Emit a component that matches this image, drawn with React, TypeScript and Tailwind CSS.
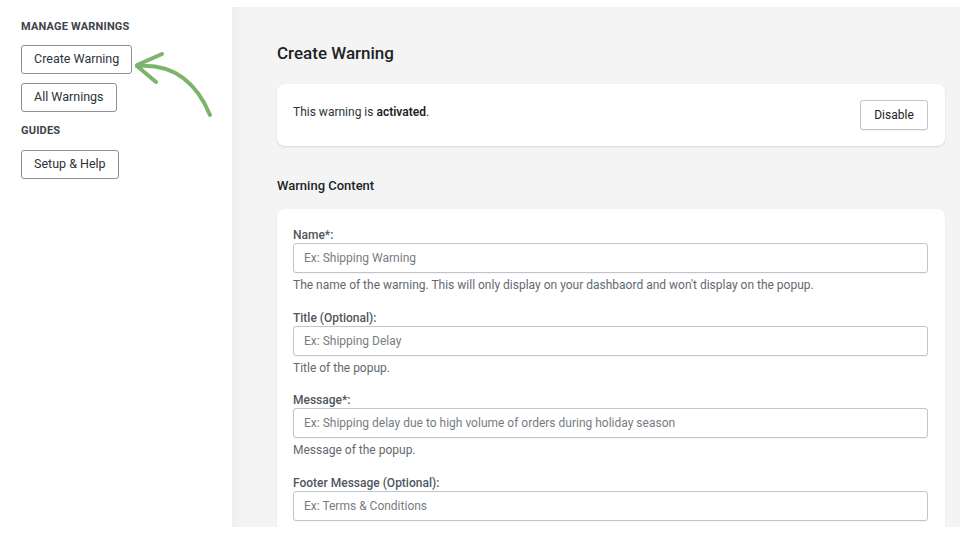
import React from "react";

const fields = [
  {
    label: "Name*:",
    placeholder: "Ex: Shipping Warning",
    help: "The name of the warning. This will only display on your dashbaord and won't display on the popup.",
  },
  { label: "Title (Optional):", placeholder: "Ex: Shipping Delay", help: "Title of the popup." },
  {
    label: "Message*:",
    placeholder: "Ex: Shipping delay due to high volume of orders during holiday season",
    help: "Message of the popup.",
  },
  { label: "Footer Message (Optional):", placeholder: "Ex: Terms & Conditions", help: "Footer of the popup." },
];

function SideButton({ children }: { children: React.ReactNode }) {
  return (
    <button className="h-[29px] px-[12px] rounded-[3px] border border-[#8c8f94] bg-white text-[12.5px] text-[#2c3338] leading-none">
      {children}
    </button>
  );
}

function Arrow() {
  return (
    <svg className="absolute left-0 top-0 pointer-events-none" width="240" height="140" viewBox="0 0 240 140">
      <path d="M210 115 Q188 62 137 66" fill="none" stroke="#7db46c" strokeWidth="4" strokeLinecap="round" />
      <path d="M137 65 L162 54" fill="none" stroke="#7db46c" strokeWidth="4" strokeLinecap="round" />
      <path d="M137 66 L156 82" fill="none" stroke="#7db46c" strokeWidth="4" strokeLinecap="round" />
    </svg>
  );
}

export default function App() {
  return (
    <div className="relative w-[960px] h-[540px] bg-white flex overflow-hidden" style={{ fontFamily: "Roboto, 'Liberation Sans', sans-serif" }}>
      <aside className="w-[232px] shrink-0 pl-[21px] pt-[19px] flex flex-col items-start">
        <h3 className="text-[11px] leading-[16px] font-bold tracking-[0.2px] text-[#3c434a] uppercase mb-[10px]">Manage Warnings</h3>
        <SideButton>Create Warning</SideButton>
        <div className="h-[9px]" />
        <SideButton>All Warnings</SideButton>
        <h3 className="text-[11px] leading-[16px] font-bold tracking-[0.2px] text-[#3c434a] uppercase mt-[11px] mb-[11px]">Guides</h3>
        <SideButton>Setup &amp; Help</SideButton>
      </aside>
      <Arrow />
      <main className="flex-1 mt-[7px] h-[520px] bg-[#f4f4f4] overflow-hidden pl-[45px] pr-[15px] pt-[34px] shadow-[inset_12px_0_10px_-10px_rgba(0,0,0,0.04)]">
        <h1 className="text-[17px] leading-[24px] font-medium text-[#1d2327] mb-[19px]">Create Warning</h1>
        <div className="h-[62px] bg-white rounded-lg shadow-[0_1px_2px_rgba(0,0,0,0.12)] flex items-center justify-between pl-[16px] pr-[17px]">
          <p className="-mt-[6px] text-[12px] text-[#2c3338]">
            This warning is <span className="font-semibold text-[#1d2327]">activated</span>.
          </p>
          <button className="h-[30px] w-[68px] rounded-[3px] border border-[#c3c4c7] bg-white text-[12px] text-[#1d2327] shadow-[0_1px_1px_rgba(0,0,0,0.06)]">
            Disable
          </button>
        </div>
        <h2 className="mt-[30px] mb-[13px] text-[13px] leading-[20px] font-medium text-[#1d2327]">Warning Content</h2>
        <div className="bg-white rounded-lg shadow-[0_1px_2px_rgba(0,0,0,0.08)] pl-[16px] pr-[17px] pt-[18px] pb-[20px] flex flex-col gap-[16.5px]">
          {fields.map((f) => (
            <div key={f.label} className="flex flex-col">
              <label className="text-[12px] leading-[16px] font-medium text-[#50575e]">{f.label}</label>
              <input
                readOnly
                placeholder={f.placeholder}
                className="h-[30px] rounded-[3px] border border-[#c3c4c7] bg-white px-[10px] text-[12px] placeholder:text-[#787c82] shadow-[0_1px_1px_rgba(0,0,0,0.04)] outline-none"
              />
              <p className="mt-[4px] text-[12px] leading-[16px] text-[#646970]">{f.help}</p>
            </div>
          ))}
        </div>
      </main>
    </div>
  );
}
